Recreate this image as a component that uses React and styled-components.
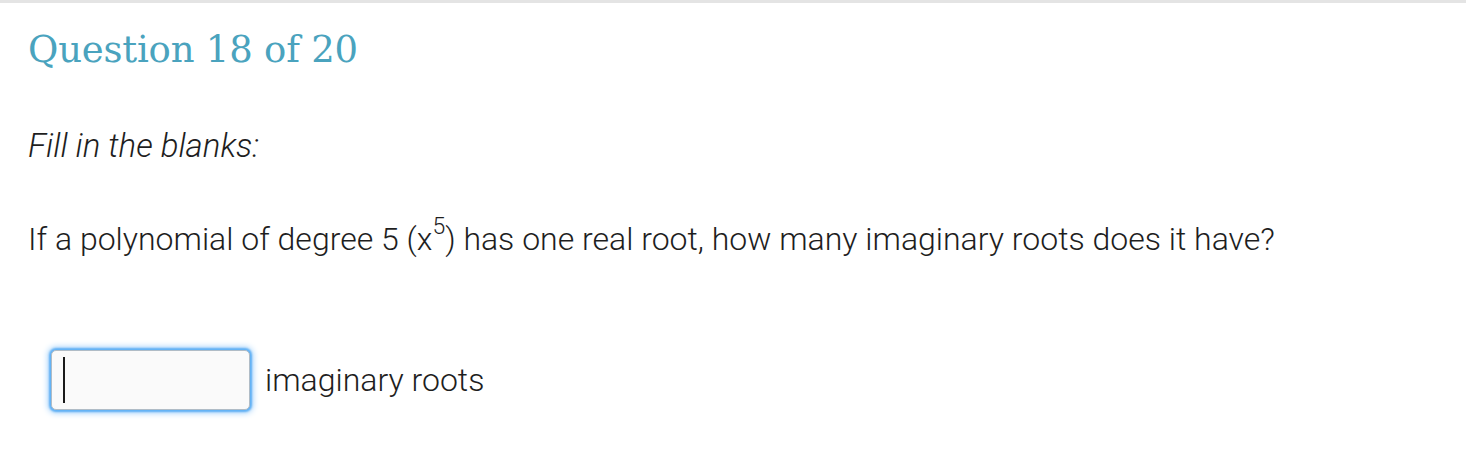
import React from "react";
import styled, { createGlobalStyle } from "styled-components";

const Global = createGlobalStyle`
  html, body { margin: 0; padding: 0; background: #ffffff; }
  body { font-family: Roboto, "Liberation Sans", sans-serif; }
`;

const Page = styled.div`
  border-top: 3px solid #e4e4e4;
  padding: 23px 28px 0 28px;
  height: 433px;
  box-sizing: border-box;
  background: #fff;
`;

const Heading = styled.h1`
  margin: 0;
  font-family: "DejaVu Serif", serif;
  font-weight: 400;
  font-size: 37px;
  line-height: 48px;
  color: #4aa3be;
  letter-spacing: -0.2px;
`;

const Instruction = styled.p`
  margin: 52px 0 0 0;
  font-family: Roboto, sans-serif;
  font-style: italic;
  font-weight: 300;
  font-size: 33px;
  line-height: 40px;
  color: #1e1e1e;
`;

const Prompt = styled.p`
  margin: 53px 0 0 0;
  font-family: Roboto, sans-serif;
  font-weight: 300;
  font-size: 32px;
  line-height: 40px;
  color: #1e1e1e;
  sup { font-size: 23px; line-height: 0; position: relative; top: -4px; }
`;

const AnswerRow = styled.div`
  margin: 91px 0 0 23px;
  display: flex;
  align-items: center;
  gap: 15px;
`;

const Blank = styled.div`
  position: relative;
  width: 199px;
  height: 60px;
  box-sizing: border-box;
  background: #fafafa;
  border: 1px solid #b0bcc6;
  border-radius: 5px;
  box-shadow: 0 0 2px 2px #5fb0f5, 0 0 6px 3px #a4d2fa;
`;

const Caret = styled.span`
  position: absolute;
  left: 11px;
  top: 6px;
  width: 2px;
  height: 46px;
  background: #1a1a1a;
`;

const Unit = styled.span`
  font-family: Roboto, sans-serif;
  font-weight: 300;
  font-size: 32px;
  color: #1e1e1e;
`;

export default function App() {
  return (
    <>
      <Global />
      <Page>
        <Heading>Question 18 of 20</Heading>
        <Instruction>Fill in the blanks:</Instruction>
        <Prompt>
          If a polynomial of degree 5 (x<sup>5</sup>) has one real root, how many imaginary roots does it have?
        </Prompt>
        <AnswerRow>
          <Blank>
            <Caret />
          </Blank>
          <Unit>imaginary roots</Unit>
        </AnswerRow>
      </Page>
    </>
  );
}
